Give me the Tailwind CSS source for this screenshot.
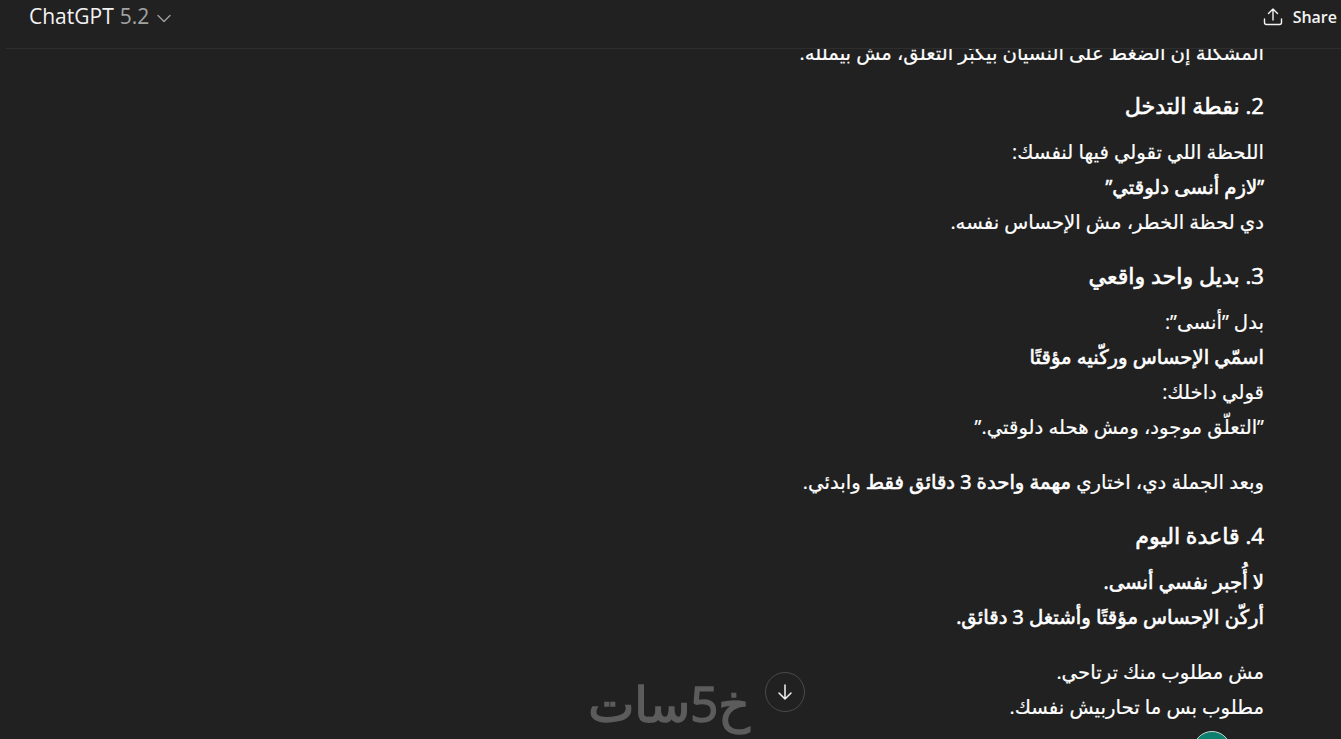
<!DOCTYPE html>
<html lang="ar">
<head>
    <meta charset="UTF-8">
    <meta name="viewport" content="width=device-width, initial-scale=1.0">
    <title>ChatGPT</title>
    <script src="https://cdn.jsdelivr.net/npm/@tailwindcss/browser@4"></script>
</head>
<body class="h-screen overflow-hidden bg-[#212121] text-white font-['Open_Sans','DejaVu_Sans',sans-serif]">
    <!-- Header -->
    <header class="h-[49px] ml-[6px] pl-[23px] pr-[4px] flex items-start justify-between border-b border-[#2e2e2e]" dir="ltr">
        <div class="flex items-center h-[34px] text-[21px]">
            <span class="text-[#f3f3f3]">ChatGPT</span>
            <span class="ml-[6px] text-[#a3a3a3]">5.2</span>
            <svg class="ml-[7px] mt-[1px]" width="16" height="16" viewBox="0 0 16 16" fill="none" stroke="#a3a3a3" stroke-width="1.3" stroke-linecap="round" stroke-linejoin="round"><path d="M2 5.5l6 6 6-6"/></svg>
        </div>
        <div class="flex items-center h-[34px] gap-[10px] text-[#f3f3f3] text-[16px] font-semibold">
            <svg width="20" height="20" viewBox="0 0 20 20" fill="none" stroke="#f3f3f3" stroke-width="1.4" stroke-linecap="round" stroke-linejoin="round"><path d="M1.5 12v3.5a2 2 0 0 0 2 2h13a2 2 0 0 0 2-2V12"/><path d="M10 13V2M5.5 6.5L10 2l4.5 4.5"/></svg>
            <span>Share</span>
        </div>
    </header>

    <!-- Conversation -->
    <main class="relative h-[690px] overflow-hidden">
        <div dir="rtl" class="w-[768px] ml-[496px] -mt-[14px] text-[19.7px] leading-[35px] text-white [-webkit-text-stroke:0.2px_#ffffff]">
            <p>المشكلة إن الضغط على النسيان بيكبّر التعلق، مش بيملله.</p>
            <h3 class="mt-[18px] text-[22.2px] [-webkit-text-stroke:0.6px_#ffffff] leading-[35px]">2. نقطة التدخل</h3>
            <p class="mt-[11px]">اللحظة اللي تقولي فيها لنفسك:</p>
            <p class="[-webkit-text-stroke:0.6px_#ffffff]">”لازم أنسى دلوقتي”</p>
            <p>دي لحظة الخطر، مش الإحساس نفسه.</p>
            <h3 class="mt-[19px] text-[22.2px] [-webkit-text-stroke:0.6px_#ffffff] leading-[35px]">3. بديل واحد واقعي</h3>
            <p class="mt-[11px]">بدل ”أنسى”:</p>
            <p class="[-webkit-text-stroke:0.6px_#ffffff]">اسمّي الإحساس وركّنيه مؤقتًا</p>
            <p>قولي داخلك:</p>
            <p>”التعلّق موجود، ومش هحله دلوقتي.”</p>
            <p class="mt-[20px]">وبعد الجملة دي، اختاري <span class="[-webkit-text-stroke:0.6px_#ffffff]">مهمة واحدة 3 دقائق فقط</span> وابدئي.</p>
            <h3 class="mt-[19px] text-[22.2px] [-webkit-text-stroke:0.6px_#ffffff] leading-[35px]">4. قاعدة اليوم</h3>
            <p class="mt-[11px] [-webkit-text-stroke:0.6px_#ffffff]">لا أُجبر نفسي أنسى.</p>
            <p class="[-webkit-text-stroke:0.6px_#ffffff]">أركّن الإحساس مؤقتًا وأشتغل 3 دقائق.</p>
            <p class="mt-[20px]">مش مطلوب منك ترتاحي.</p>
            <p>مطلوب بس ما تحاربيش نفسك.</p>
        </div>

        <!-- Scroll button, watermark, avatar -->
        <div class="absolute left-[765px] top-[623px] w-[40px] h-[40px] rounded-full border border-[#4a4a4a] bg-[#212121] flex items-center justify-center">
            <svg width="20" height="20" viewBox="0 0 20 20" fill="none" stroke="#f3f3f3" stroke-width="1.5" stroke-linecap="round" stroke-linejoin="round"><path d="M10 3v14M4 11l6 6 6-6"/></svg>
        </div>
        <div dir="rtl" class="absolute left-[570px] top-[624px] w-[180px] text-[49px] leading-[60px] text-[#5c5c5c] [-webkit-text-stroke:1.5px_#5c5c5c]">خ5سات</div>
        <div class="absolute left-[1193px] top-[682px] w-[38px] h-[38px] rounded-full bg-[#0d7f6e] border border-[#c9d9d6]"></div>
    </main>
</body>
</html>
